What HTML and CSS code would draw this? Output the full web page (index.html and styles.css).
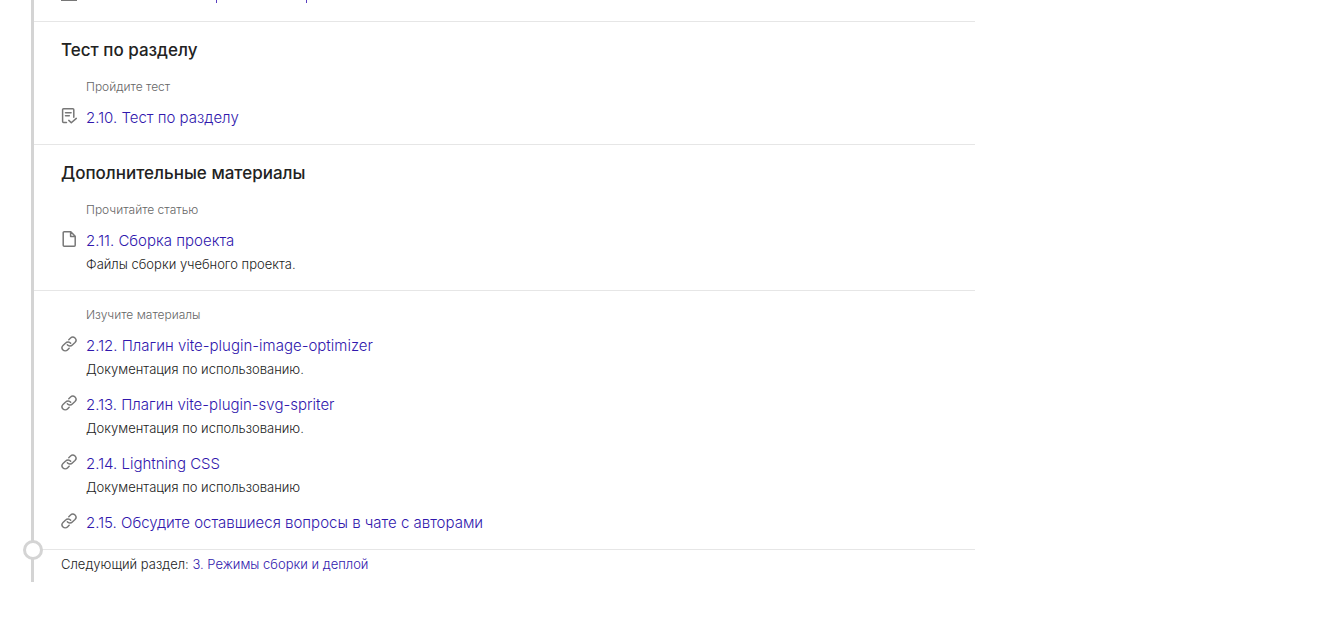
FILE: index.html
```
<!DOCTYPE html>
<html lang="ru">
<head>
  <meta charset="UTF-8">
  <meta name="viewport" content="width=device-width, initial-scale=1.0">
  <title>Материалы раздела</title>
  <link rel="stylesheet" href="styles.css">
</head>
<body>
  <!-- общие иконки -->
  <svg class="sprite" aria-hidden="true">
    <symbol id="icon-test" viewBox="0 0 16 16">
      <path d="M5.5 14.5H2.6a1 1 0 0 1-1-1V1.8a1 1 0 0 1 1-1h9.2a1 1 0 0 1 1 1V9.3M4.5 4.8h5.6M4.5 7.8h3.8M7.8 12.4l2.5 2.4 5-4.4"/>
    </symbol>
    <symbol id="icon-file" viewBox="0 0 16 16">
      <path d="M3.2.8h6.6l4.4 4.4v9a1 1 0 0 1-1 1H3.2a1 1 0 0 1-1-1V1.8a1 1 0 0 1 1-1zM9.6.8v4.6h4.6"/>
    </symbol>
    <symbol id="icon-link" viewBox="0 0 24 24">
      <path stroke-width="2.2" d="M9.5 13.2a5 5 0 0 0 7.5.4l4-3.8a4.7 4.7 0 0 0-6.7-6.7l-2.6 2.4M14.5 10.8a5 5 0 0 0-7.5-.4l-4 3.8a4.7 4.7 0 0 0 6.7 6.7l2.5-2.4"/>
    </symbol>
  </svg>

  <main class="timeline">
    <section class="part part--cut" aria-hidden="true">
      <span class="cut-icon"></span>
      <span class="cut-tail"></span>
      <span class="cut-tail cut-tail--last"></span>
    </section>

    <section class="part">
      <h2 class="part__title">Тест по разделу</h2>
      <p class="part__label">Пройдите тест</p>
      <ul class="list">
        <li class="item">
          <svg class="item__icon" aria-hidden="true"><use href="#icon-test"/></svg>
          <a class="item__link" href="#">2.10. Тест по разделу</a>
        </li>
      </ul>
    </section>

    <section class="part">
      <h2 class="part__title">Дополнительные материалы</h2>
      <p class="part__label">Прочитайте статью</p>
      <ul class="list">
        <li class="item">
          <svg class="item__icon" aria-hidden="true"><use href="#icon-file"/></svg>
          <a class="item__link" href="#">2.11. Сборка проекта</a>
          <p class="item__text">Файлы сборки учебного проекта.</p>
        </li>
      </ul>
    </section>

    <section class="part">
      <p class="part__label">Изучите материалы</p>
      <ul class="list">
        <li class="item">
          <svg class="item__icon" aria-hidden="true"><use href="#icon-link"/></svg>
          <a class="item__link" href="#">2.12. Плагин vite-plugin-image-optimizer</a>
          <p class="item__text">Документация по использованию.</p>
        </li>
        <li class="item">
          <svg class="item__icon" aria-hidden="true"><use href="#icon-link"/></svg>
          <a class="item__link" href="#">2.13. Плагин vite-plugin-svg-spriter</a>
          <p class="item__text">Документация по использованию.</p>
        </li>
        <li class="item">
          <svg class="item__icon" aria-hidden="true"><use href="#icon-link"/></svg>
          <a class="item__link" href="#">2.14. Lightning CSS</a>
          <p class="item__text">Документация по использованию</p>
        </li>
        <li class="item">
          <svg class="item__icon" aria-hidden="true"><use href="#icon-link"/></svg>
          <a class="item__link" href="#">2.15. Обсудите оставшиеся вопросы в чате с авторами</a>
        </li>
      </ul>
    </section>

    <p class="next">Следующий раздел: <a href="#">3. Режимы сборки и деплой</a></p>
  </main>
</body>
</html>
```

FILE: styles.css
```
*,*::before{box-sizing:border-box;}
body{margin:0;background:#fff;color:#222;font-family:"Inter","Open Sans",sans-serif;font-size:13px;font-weight:300;line-height:23px;}
h2,p,ul{margin:0;padding:0;}
a{color:#3118ad;text-decoration:none;}
a:hover{text-decoration:underline;}
.sprite{display:none;}

.timeline{max-width:944px;margin:0 31px 46px;border-left:3px solid #d4d4d4;}

.part{padding:15px 0 14px 27px;border-bottom:1px solid #e6e6e6;}
.part__title{margin-bottom:15px;font-size:17px;font-weight:500;line-height:26px;}
.part__label{margin-bottom:10px;padding-left:25px;color:#666;font-size:12px;line-height:18px;}

/* нижний край предыдущего пункта */
.part--cut{display:flex;align-items:flex-start;height:22px;padding-top:0;}
.cut-icon{width:16px;height:1px;background:#777;}
.cut-tail{width:1px;height:3px;margin-left:139px;background:#5a3fc0;}
.cut-tail--last{margin-left:89px;}

.list{display:grid;gap:12px;list-style:none;}
.item{display:grid;grid-template-columns:16px 1fr;column-gap:9px;}
.item__icon{width:16px;height:16px;margin-top:2px;fill:none;stroke:#777;stroke-width:1.5;stroke-linecap:round;stroke-linejoin:round;}
.item__link{justify-self:start;font-size:15px;line-height:24px;}
.item__text{grid-column:2;}

.next{position:relative;padding:3px 0 6px 27px;}
.next::before{content:"";position:absolute;top:-10px;left:-11px;width:20px;height:20px;border:3px solid #d4d4d4;border-radius:50%;background:#fff;}
```
